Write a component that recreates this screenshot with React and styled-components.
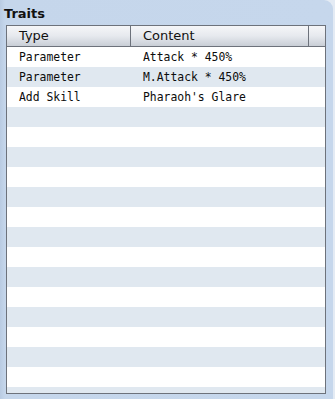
import React from 'react';
import styled, { createGlobalStyle } from 'styled-components';

const Global = createGlobalStyle`
    html, body {
        margin: 0;
        padding: 0;
        background: #e4ebf4;
    }
`;

const Panel = styled.div`
    width: 333px;
    height: 399px;
    box-sizing: border-box;
    background: linear-gradient(to right, #b9cbe2 0px, #c5d6eb 5px, #c6d7ec 100%);
    border-radius: 0 9px 0 0;
    padding: 5px 8px 0 6px;
    display: flex;
    flex-direction: column;
    overflow: hidden;
`;

const Title = styled.div`
    font-family: "DejaVu Sans", sans-serif;
    font-weight: bold;
    font-size: 13px;
    line-height: 17px;
    color: #111;
    margin: 0 0 3px -2px;
`;

const Table = styled.div`
    width: 320px;
    height: 369px;
    box-sizing: border-box;
    border: 1px solid #6d727b;
    background: #fff;
    display: flex;
    flex-direction: column;
    overflow: hidden;
`;

const HeadRow = styled.div`
    display: flex;
    height: 20px;
    flex: none;
    border-bottom: 1px solid #6d727b;
    background: linear-gradient(to bottom, #f5f6f8 0%, #e6e9ee 50%, #c9ced6 100%);
`;

const HeadCell = styled.div`
    width: ${(p) => p.w}px;
    flex: ${(p) => (p.grow ? 1 : 'none')};
    box-sizing: border-box;
    padding-left: 12px;
    border-right: ${(p) => (p.last ? 'none' : '1px solid #6d727b')};
    font-family: "DejaVu Sans", sans-serif;
    font-size: 13px;
    line-height: 20px;
    color: #111;
`;

const Row = styled.div`
    display: flex;
    height: 20px;
    flex: none;
    background: ${(p) => (p.alt ? '#e0e8f0' : '#ffffff')};
`;

const Cell = styled.div`
    width: ${(p) => p.w}px;
    flex: none;
    box-sizing: border-box;
    padding-left: 12px;
    font-family: "DejaVu Sans Mono", monospace;
    font-size: 11.4px;
    line-height: 21px;
    color: #0c0c0c;
    white-space: pre;
`;

const traits = [
    { type: 'Parameter', content: 'Attack * 450%' },
    { type: 'Parameter', content: 'M.Attack * 450%' },
    { type: 'Add Skill', content: "Pharaoh's Glare" },
];

const App = () => {
    const rows = [];
    for (let i = 0; i < 18; i++) rows.push(traits[i] || { type: '', content: '' });
    return (
        <>
            <Global />
            <Panel>
                <Title>Traits</Title>
                <Table>
                    <HeadRow>
                        <HeadCell w={124}>Type</HeadCell>
                        <HeadCell w={178}>Content</HeadCell>
                        <HeadCell grow last />
                    </HeadRow>
                    {rows.map((r, i) => (
                        <Row key={i} alt={i % 2 === 1}>
                            <Cell w={124}>{r.type}</Cell>
                            <Cell w={178}>{r.content}</Cell>
                        </Row>
                    ))}
                </Table>
            </Panel>
        </>
    );
};

export default App;
